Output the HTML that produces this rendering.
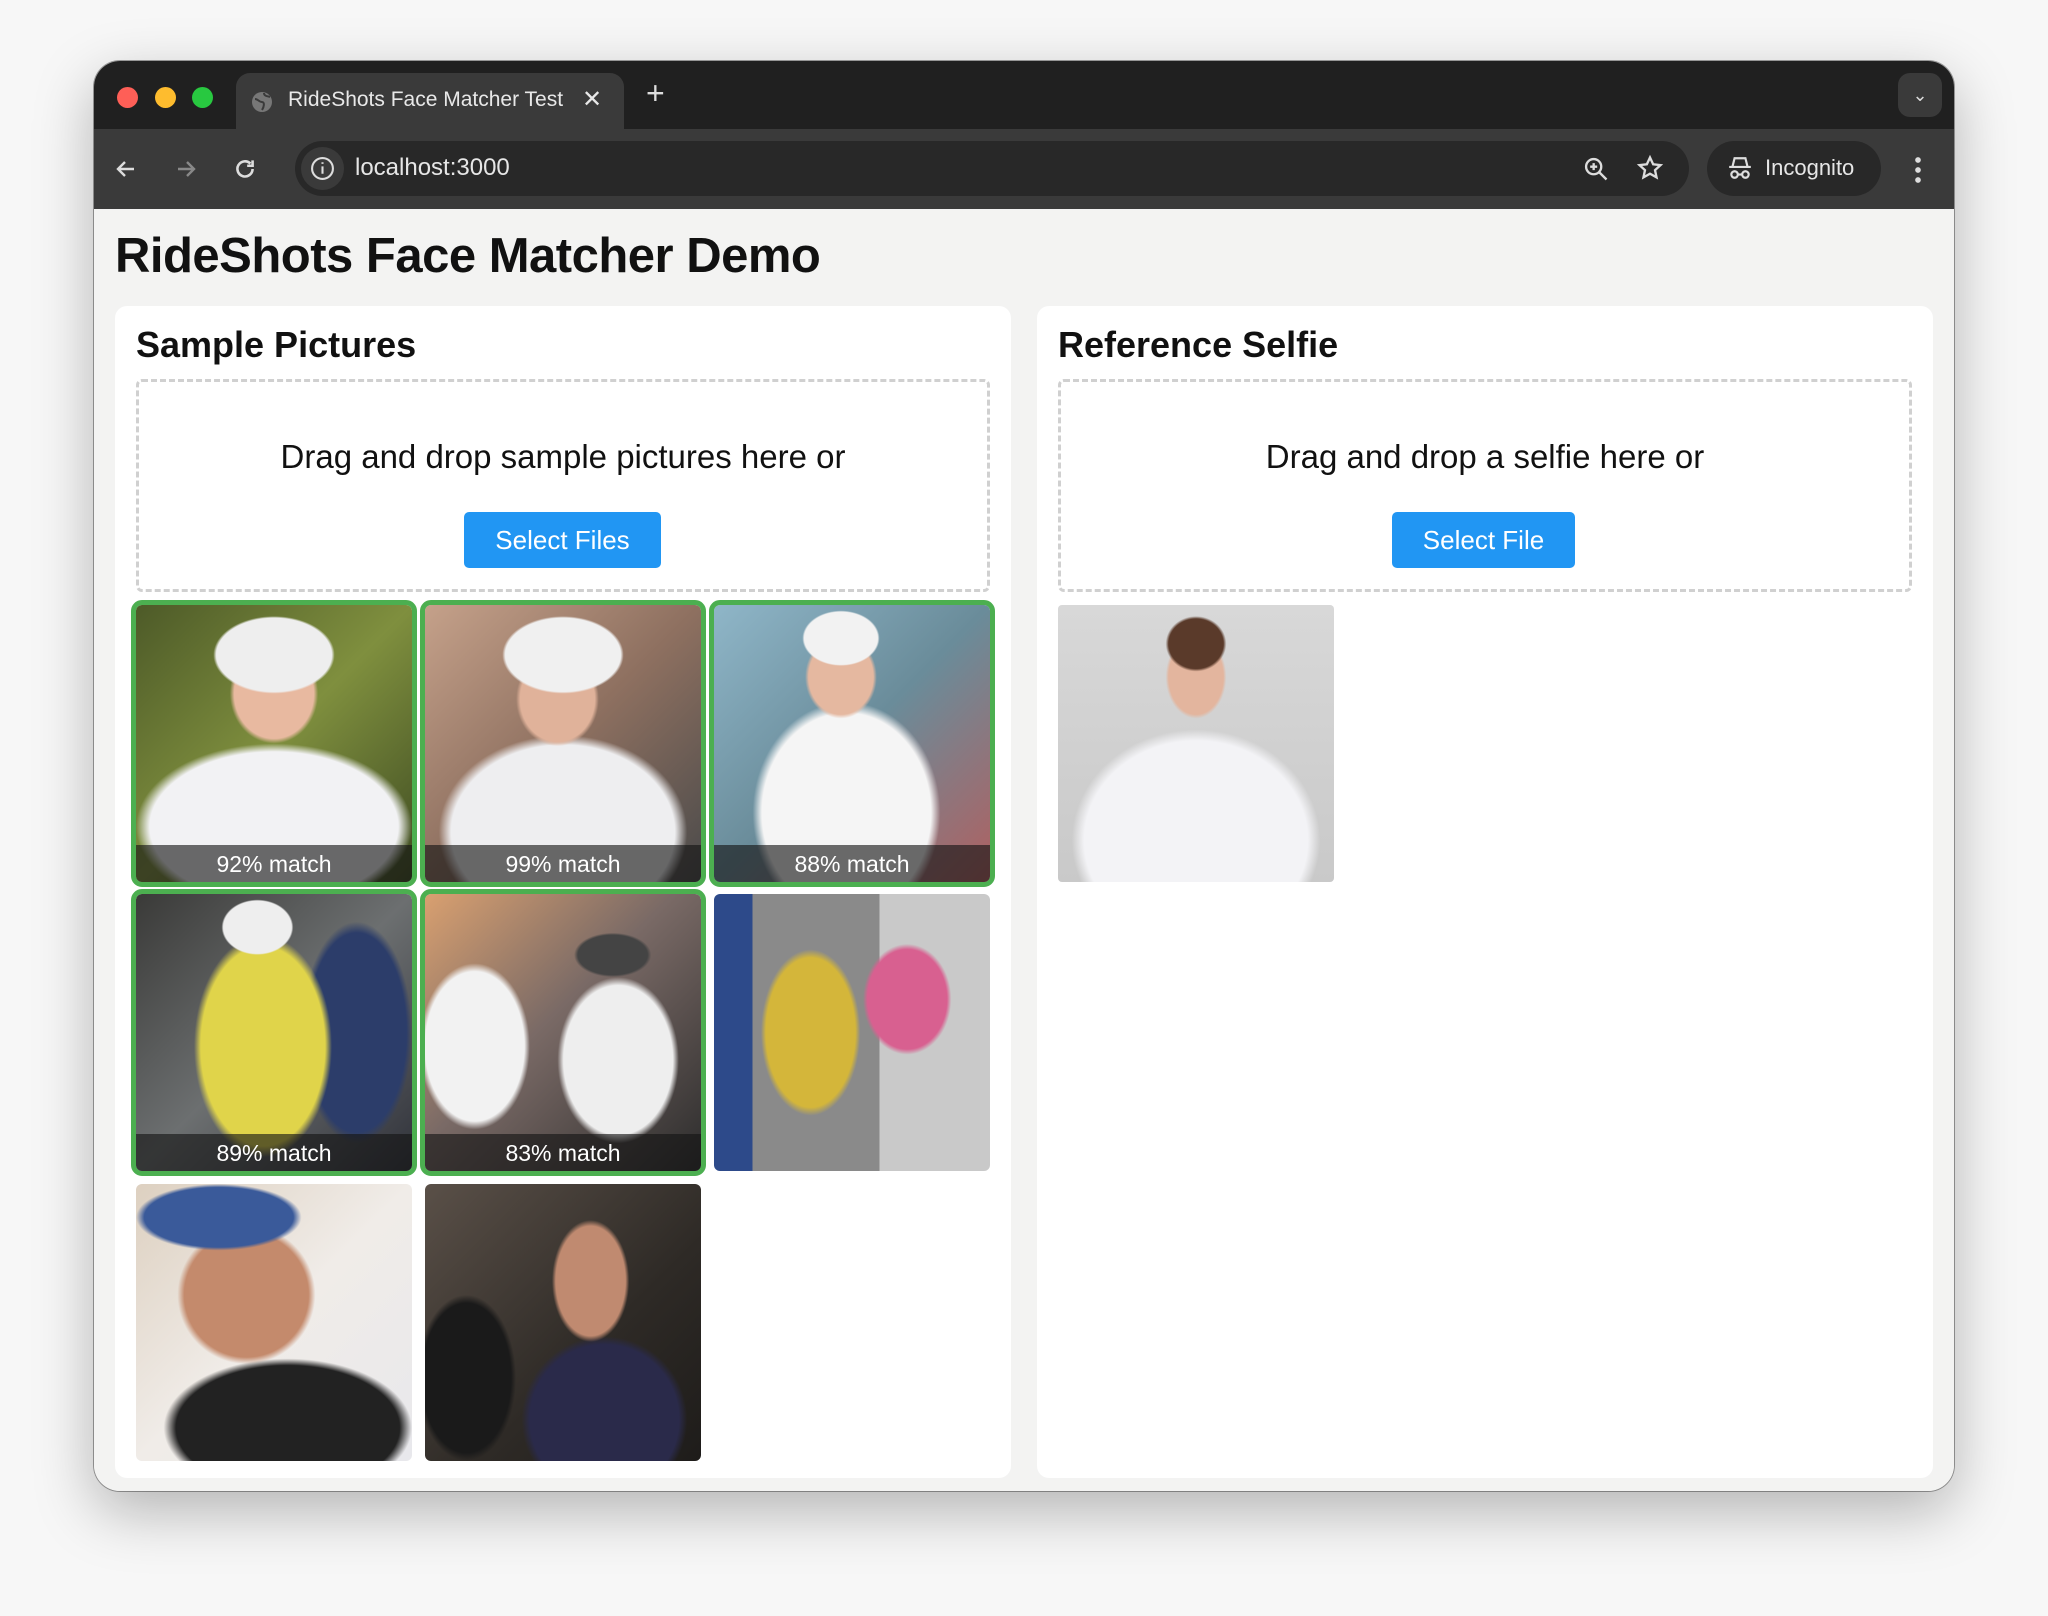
<!DOCTYPE html>
<html><head><meta charset="utf-8"><style>
*{box-sizing:border-box;margin:0;padding:0}
body{width:2048px;height:1616px;background:#f7f7f7;font-family:"Liberation Sans",Arial,sans-serif;position:relative;overflow:hidden}
.win{position:absolute;left:94px;top:61px;width:1860px;height:1430px;border-radius:26px;background:#f3f3f2;overflow:hidden;box-shadow:0 20px 60px rgba(0,0,0,.28),0 0 0 1px rgba(0,0,0,.35)}
.tabbar{position:absolute;left:0;top:0;width:100%;height:68px;background:#202020}
.dot{position:absolute;top:26px;width:21px;height:21px;border-radius:50%}
.tab{position:absolute;left:142px;top:12px;width:388px;height:56px;background:#3a3a3a;border-radius:14px 14px 0 0;color:#e8e8e8;font-size:21px}
.toolbar{position:absolute;left:0;top:68px;width:100%;height:80px;background:#3a3a3a}
.url{position:absolute;left:201px;top:12px;width:1394px;height:55px;border-radius:28px;background:#282828;color:#e6e6e6;font-size:24px}
.inc{position:absolute;left:1613px;top:12px;width:174px;height:55px;border-radius:28px;background:#282828;color:#e6e6e6;font-size:22px}
.content{position:absolute;left:0;top:148px;width:100%;bottom:0;background:#f3f3f2}
h1{position:absolute;left:21px;top:19px;font-size:49px;font-weight:bold;color:#111;letter-spacing:-0.5px;z-index:2}
.card{position:absolute;top:97px;width:896px;height:1172px;background:#fff;border-radius:12px}
.card h2{position:absolute;left:21px;top:18px;font-size:36px;font-weight:bold;color:#111}
.drop{position:absolute;left:21px;top:73px;width:854px;height:213px;border:3px dashed #d0d0d0;border-radius:6px;text-align:center}
.drop p{position:absolute;left:0;right:0;top:56px;font-size:33px;color:#111}
.btn{position:absolute;top:130px;height:56px;background:#2196f3;color:#fff;font-size:26px;border-radius:5px;line-height:56px;text-align:center}
.cell{position:absolute;width:276px;height:277px;border-radius:6px;overflow:hidden}
.m{outline:5px solid #4caf50;border-radius:6px}
.lab{position:absolute;left:0;right:0;bottom:0;height:37px;background:rgba(20,20,20,.62);color:#fff;font-size:23px;text-align:center;line-height:38px}
</style></head><body>
<div class="win">
 <div class="tabbar">
  <div class="dot" style="left:23px;background:#fe5f57"></div>
  <div class="dot" style="left:61px;background:#febc2e"></div>
  <div class="dot" style="left:98px;background:#28c840"></div>
  <div class="tab">
   <svg style="position:absolute;left:15px;top:18px" width="22" height="22" viewBox="0 0 22 22"><circle cx="11" cy="11" r="10" fill="#777"/><path d="M4 8c3 0 4 3 7 3s2 5 0 8M13 2c0 3 3 3 6 4" stroke="#3a3a3a" stroke-width="2" fill="none"/></svg>
   <span style="position:absolute;left:52px;top:15px">RideShots Face Matcher Test</span>
   <span style="position:absolute;left:346px;top:12px;font-size:24px">✕</span>
  </div>
  <span style="position:absolute;left:552px;top:14px;color:#ddd;font-size:32px">+</span>
  <div style="position:absolute;right:12px;top:12px;width:44px;height:44px;border-radius:12px;background:#3a3a3a;color:#ddd;text-align:center;line-height:44px;font-size:18px">⌄</div>
 </div>
 <div class="toolbar">
  <svg style="position:absolute;left:20px;top:28px" width="24" height="24" viewBox="0 0 24 24" stroke="#ddd" stroke-width="2.4" fill="none"><path d="M20 12H4M11 5l-7 7 7 7"/></svg>
  <svg style="position:absolute;left:80px;top:28px" width="24" height="24" viewBox="0 0 24 24" stroke="#888" stroke-width="2.4" fill="none"><path d="M4 12h16M13 5l7 7-7 7"/></svg>
  <svg style="position:absolute;left:138px;top:27px" width="26" height="26" viewBox="0 0 24 24" stroke="#ddd" stroke-width="2.4" fill="none"><path d="M19 12a7 7 0 1 1-2-5M19 4v5h-5"/></svg>
  <div class="url">
   <div style="position:absolute;left:6px;top:6px;width:43px;height:43px;border-radius:50%;background:#3a3a3a"></div>
   <svg style="position:absolute;left:15px;top:15px" width="25" height="25" viewBox="0 0 24 24" fill="none" stroke="#ddd" stroke-width="2"><circle cx="12" cy="12" r="10"/><path d="M12 10v7M12 6v1.5"/></svg>
   <span style="position:absolute;left:60px;top:13px">localhost:3000</span>
   <svg style="position:absolute;left:1287px;top:14px" width="28" height="28" viewBox="0 0 24 24" fill="none" stroke="#ddd" stroke-width="2"><circle cx="10" cy="10" r="6.5"/><path d="M15 15l6 6M10 7v6M7 10h6"/></svg>
   <svg style="position:absolute;left:1341px;top:13px" width="28" height="28" viewBox="0 0 24 24" fill="none" stroke="#ddd" stroke-width="2"><path d="M12 3l2.7 5.8 6.3.7-4.7 4.3 1.3 6.2L12 16.9 6.4 20l1.3-6.2L3 9.5l6.3-.7z"/></svg>
  </div>
  <div class="inc">
   <svg style="position:absolute;left:20px;top:14px" width="26" height="26" viewBox="0 0 24 24" fill="none" stroke="#ddd" stroke-width="2"><path d="M7 3h10l2 8H5zM2 11h20"/><circle cx="7" cy="18" r="3"/><circle cx="17" cy="18" r="3"/><path d="M10 18h4"/></svg>
   <span style="position:absolute;left:58px;top:14px">Incognito</span>
  </div>
  <div style="position:absolute;left:1821px;top:26px;width:6px;height:28px;background:radial-gradient(circle,#ddd 2.6px,transparent 3px) 0 0/6px 10px"></div>
 </div>
 <div class="content">
  <h1>RideShots Face Matcher Demo</h1>
  <div class="card" style="left:21px">
   <h2>Sample Pictures</h2>
   <div class="drop"><p>Drag and drop sample pictures here or</p><div class="btn" style="left:325px;width:197px">Select Files</div></div>
   <div class="cell m" style="left:21px;top:299px;background:radial-gradient(ellipse 22% 14% at 50% 18%,#eee 95%,transparent),radial-gradient(ellipse 16% 18% at 50% 32%,#e8b9a0 90%,transparent),radial-gradient(ellipse 50% 30% at 50% 80%,#f2f2f4 90%,transparent),linear-gradient(135deg,#4d5a28,#7f8f3e 50%,#3f4c22)"><div class="lab">92% match</div></div>
   <div class="cell m" style="left:310px;top:299px;background:radial-gradient(ellipse 22% 14% at 50% 18%,#f0f0f0 95%,transparent),radial-gradient(ellipse 15% 17% at 48% 34%,#e0b29a 90%,transparent),radial-gradient(ellipse 45% 35% at 50% 82%,#eeeef0 90%,transparent),linear-gradient(135deg,#c5a18a,#8e7060 50%,#4a4a4a)"><div class="lab">99% match</div></div>
   <div class="cell m" style="left:599px;top:299px;background:radial-gradient(ellipse 14% 10% at 46% 12%,#f2f2f2 95%,transparent),radial-gradient(ellipse 13% 15% at 46% 26%,#e5b8a0 90%,transparent),radial-gradient(ellipse 34% 40% at 48% 75%,#f5f5f5 90%,transparent),linear-gradient(135deg,#8fb6c8,#6a8c9a 50%,#b06060)"><div class="lab">88% match</div></div>
   <div class="cell m" style="left:21px;top:588px;background:radial-gradient(ellipse 13% 10% at 44% 12%,#eee 95%,transparent),radial-gradient(ellipse 25% 40% at 46% 55%,#e0d44a 90%,transparent),radial-gradient(ellipse 20% 40% at 80% 50%,#2c3d6a 90%,transparent),linear-gradient(135deg,#3a3a38,#6c6f70 50%,#30323a)"><div class="lab">89% match</div></div>
   <div class="cell m" style="left:310px;top:588px;background:radial-gradient(ellipse 20% 30% at 18% 55%,#f2f2f2 90%,transparent),radial-gradient(ellipse 22% 30% at 70% 60%,#eee 90%,transparent),radial-gradient(ellipse 14% 8% at 68% 22%,#444 90%,transparent),linear-gradient(135deg,#d9a070,#7a6a66 45%,#2c2c2c)"><div class="lab">83% match</div></div>
   <div class="cell" style="left:599px;top:588px;background:radial-gradient(ellipse 18% 30% at 35% 50%,#d4b63a 90%,transparent),radial-gradient(ellipse 16% 20% at 70% 38%,#d86090 90%,transparent),linear-gradient(90deg,#2d4a8a 0 14%,#8a8a8a 14% 60%,#c9c9c9 60%)"></div>
   <div class="cell" style="left:21px;top:878px;background:radial-gradient(ellipse 30% 12% at 30% 12%,#3a5a9a 90%,transparent),radial-gradient(ellipse 25% 25% at 40% 40%,#c48a6c 90%,transparent),radial-gradient(ellipse 45% 25% at 55% 88%,#222 90%,transparent),linear-gradient(135deg,#ddd0c0,#f0ece8 50%,#e8e8ec)"></div>
   <div class="cell" style="left:310px;top:878px;background:radial-gradient(ellipse 14% 22% at 60% 35%,#c08a70 90%,transparent),radial-gradient(ellipse 30% 30% at 65% 85%,#2a2a4a 90%,transparent),radial-gradient(ellipse 18% 30% at 15% 70%,#1a1a1a 90%,transparent),linear-gradient(135deg,#5a5048,#2e2a26 60%,#1e1c1a)"></div>
  </div>
  <div class="card" style="left:943px">
   <h2>Reference Selfie</h2>
   <div class="drop"><p>Drag and drop a selfie here or</p><div class="btn" style="left:331px;width:183px">Select File</div></div>
   <div class="cell" style="left:21px;top:299px;border-radius:4px;background:radial-gradient(ellipse 11% 10% at 50% 14%,#5a3a2a 90%,transparent),radial-gradient(ellipse 11% 15% at 50% 26%,#e3b59e 90%,transparent),radial-gradient(ellipse 45% 40% at 50% 85%,#f3f3f6 90%,transparent),linear-gradient(180deg,#d8d8d8,#c9c9c9)"></div>
  </div>
 </div>
</div>
</body></html>
